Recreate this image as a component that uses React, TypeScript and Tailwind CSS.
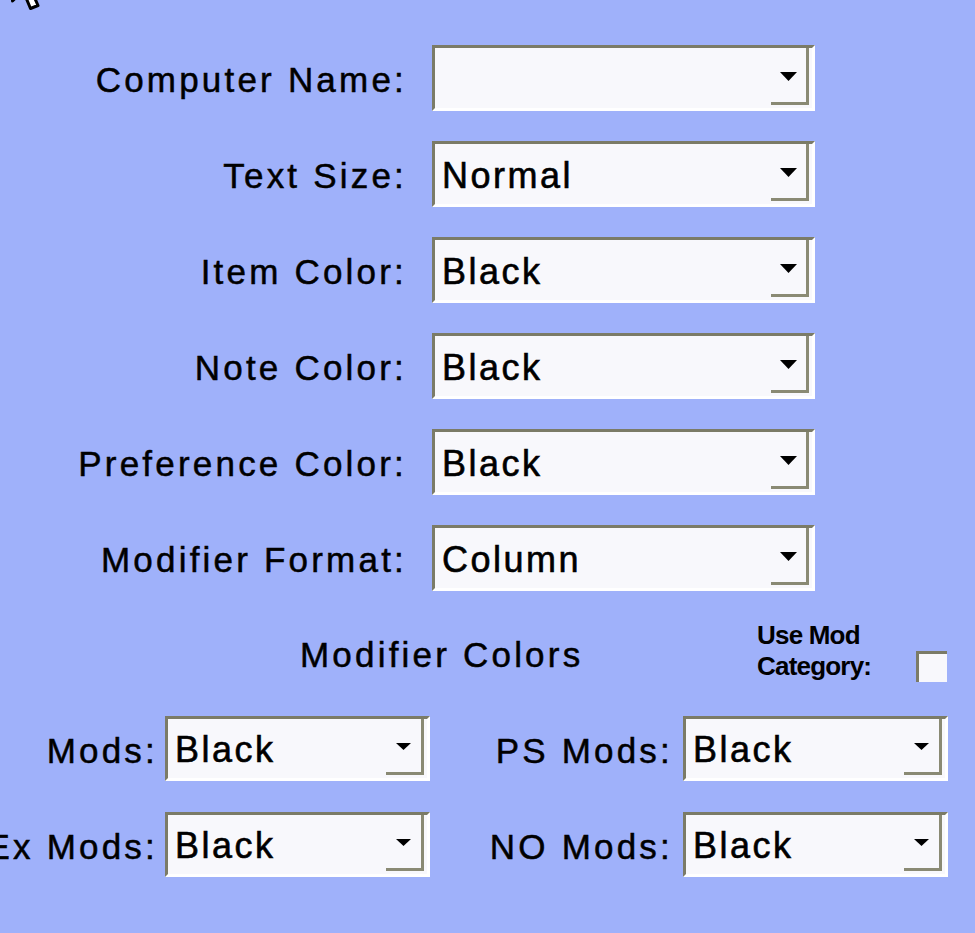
import React from "react";

const labelFont = {
  fontFamily: '"Liberation Sans", Arial, sans-serif',
};

interface DropdownProps {
  value?: string;
  small?: boolean;
  width: string;
}

const Dropdown: React.FC<DropdownProps> = ({ value, small, width }) => {
  return (
    <div
      className={`relative shrink-0 ${width} ${
        small ? "h-[65px]" : "h-[66px]"
      } bg-[#f8f8fc] border-[3px] border-l-[#7b7b67] border-t-[#7b7b67] border-r-white border-b-white`}
    >
      <div
        className="absolute inset-y-0 left-0 flex items-center pl-[7px] pt-[3px] text-[36px] tracking-[2.5px] text-black leading-none [-webkit-text-stroke:0.6px_#000]"
        style={labelFont}
      >
        {value}
      </div>
      <div className="absolute top-0 right-[3px] bottom-[3px] w-[38px] border-r-[3px] border-b-[3px] border-[#8a8a74] flex items-center justify-center">
        <svg
          width={small ? 15 : 17}
          height={small ? 7 : 9}
          viewBox="0 0 16 8"
          preserveAspectRatio="none"
          className="mt-[2px]"
        >
          <polygon points="0,0 16,0 8,8" fill="#000" />
        </svg>
      </div>
    </div>
  );
};

const Label: React.FC<{ text: string; width: string }> = ({ text, width }) => (
  <div
    className={`${width} shrink-0 flex justify-end whitespace-nowrap text-[35px] tracking-[3.2px] text-black leading-none pt-[3px] [-webkit-text-stroke:0.5px_#000]`}
    style={labelFont}
  >
    {text}
  </div>
);

const topRows: { label: string; value: string }[] = [
  { label: "Computer Name:", value: "" },
  { label: "Text Size:", value: "Normal" },
  { label: "Item Color:", value: "Black" },
  { label: "Note Color:", value: "Black" },
  { label: "Preference Color:", value: "Black" },
  { label: "Modifier Format:", value: "Column" },
];

export default function App() {
  return (
    <div className="relative w-[975px] h-[933px] overflow-hidden bg-[#9fb1fa]">
      {/* mouse pointer, mostly above the window */}
      <svg
        className="absolute left-[9px] top-[-44px]"
        width="40"
        height="60"
        viewBox="0 0 13 20"
      >
        <path
          d="M1 1 L1 15 L4.5 11.5 L7 17.5 L9.5 16.5 L7 10.8 L11.5 10.8 Z"
          fill="#ffffff"
          stroke="#000000"
          strokeWidth="1"
          strokeLinejoin="round"
        />
      </svg>

      <div className="flex flex-col gap-[30px] pt-[45px]">
        {topRows.map((row) => (
          <div key={row.label} className="flex items-center">
            <Label text={row.label} width="w-[407px]" />
            <div className="ml-[25px]">
              <Dropdown value={row.value} width="w-[383px]" />
            </div>
          </div>
        ))}
      </div>

      <div className="flex items-start mt-[29px] h-[62px]">
        <div
          className="w-[757px] shrink-0 pl-[300px] mt-[17px] text-[35px] tracking-[3.2px] leading-none text-black [-webkit-text-stroke:0.5px_#000]"
          style={labelFont}
        >
          Modifier Colors
        </div>
        <div
          className="w-[120px] shrink-0 text-[26px] font-bold leading-[31px] tracking-[-0.8px] text-black"
          style={labelFont}
        >
          <div>Use Mod</div>
          <div>Category:</div>
        </div>
        <div className="ml-[39px] mt-[31px] w-[31px] h-[31px] bg-[#f8f8fc] border-l-[3px] border-t-[3px] border-[#7b7b67]" />
      </div>

      <div className="flex flex-col gap-[31px] mt-[34px]">
        {[
          ["Mods:", "PS Mods:"],
          ["Ex Mods:", "NO Mods:"],
        ].map(([left, right]) => (
          <div key={left} className="flex items-center">
            <Label text={left} width="w-[158px]" />
            <div className="ml-[7px]">
              <Dropdown value="Black" small width="w-[265px]" />
            </div>
            <Label text={right} width="w-[243px]" />
            <div className="ml-[10px]">
              <Dropdown value="Black" small width="w-[265px]" />
            </div>
          </div>
        ))}
      </div>
    </div>
  );
}
